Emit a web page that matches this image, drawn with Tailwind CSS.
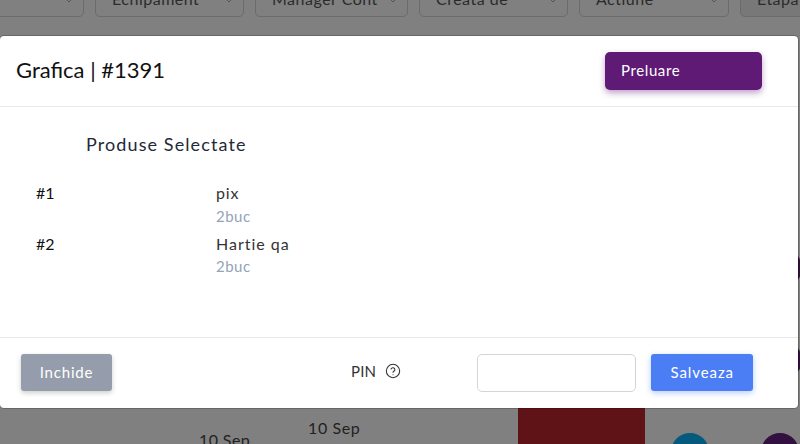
<!DOCTYPE html>
<html lang="en">
<head>
  <meta charset="UTF-8">
  <title>Grafica</title>
  <script src="https://cdn.jsdelivr.net/npm/@tailwindcss/browser@4"></script>
</head>
<body class="bg-[#808080] font-['Lato',sans-serif] text-[#111]">
<div class="relative h-[444px] w-[800px] overflow-hidden">

  <!-- Filters behind the overlay -->
  <div class="-mt-[21px] flex gap-[11px] whitespace-nowrap text-[16px] tracking-[0.5px] text-[#2b2b2b]">
    <div class="-ml-[20px] flex h-[38px] w-[104px] shrink-0 items-center justify-end rounded-[5px] border border-[#6b6b6b] pl-[16px] pr-[10px] pt-[2px]">
      <svg class="mt-[3px] h-[6px] w-[8px]" viewBox="0 0 8 6" fill="none" stroke="#555" stroke-width="1"><path d="M1 1l3 3 3-3"/></svg>
    </div>
    <div class="flex h-[38px] w-[149px] shrink-0 items-center justify-between rounded-[5px] border border-[#6b6b6b] pl-[16px] pr-[10px] pt-[2px]">
      <span>Echipament</span>
      <svg class="mt-[3px] h-[6px] w-[8px]" viewBox="0 0 8 6" fill="none" stroke="#555" stroke-width="1"><path d="M1 1l3 3 3-3"/></svg>
    </div>
    <div class="flex h-[38px] w-[153px] shrink-0 items-center justify-between rounded-[5px] border border-[#6b6b6b] pl-[16px] pr-[10px] pt-[2px]">
      <span>Manager Cont</span>
      <svg class="mt-[3px] h-[6px] w-[8px]" viewBox="0 0 8 6" fill="none" stroke="#555" stroke-width="1"><path d="M1 1l3 3 3-3"/></svg>
    </div>
    <div class="flex h-[38px] w-[149px] shrink-0 items-center justify-between rounded-[5px] border border-[#6b6b6b] pl-[16px] pr-[10px] pt-[2px]">
      <span>Creata de</span>
      <svg class="mt-[3px] h-[6px] w-[8px]" viewBox="0 0 8 6" fill="none" stroke="#555" stroke-width="1"><path d="M1 1l3 3 3-3"/></svg>
    </div>
    <div class="flex h-[38px] w-[150px] shrink-0 items-center justify-between rounded-[5px] border border-[#6b6b6b] pl-[16px] pr-[10px] pt-[2px]">
      <span>Actiune</span>
      <svg class="mt-[3px] h-[6px] w-[8px]" viewBox="0 0 8 6" fill="none" stroke="#555" stroke-width="1"><path d="M1 1l3 3 3-3"/></svg>
    </div>
    <div class="flex h-[38px] w-[100px] shrink-0 items-center rounded-[5px] border border-[#6b6b6b] bg-[#787878] pl-[16px] pt-[2px]">
      <span>Etapa</span>
    </div>
  </div>

  <!-- Board cards peeking out round the modal -->
  <div class="absolute left-[199px] top-[430px] text-[16px] leading-[20px] tracking-[0.4px] text-[#222]">10 Sep</div>
  <div class="absolute left-[308px] top-[418px] text-[16px] leading-[20px] tracking-[0.6px] text-[#222]">10 Sep</div>
  <div class="absolute left-[518px] top-[400px] h-[44px] w-[127px] bg-[#601317]"></div>
  <div class="absolute left-[671px] top-[433px] h-[38px] w-[38px] rounded-full bg-[#045a7c]"></div>
  <div class="absolute left-[761px] top-[433px] h-[38px] w-[38px] rounded-full bg-[#32103f]"></div>
  <div class="absolute left-[764px] top-[249px] h-[38px] w-[38px] rounded-full bg-[#32103f]"></div>
  <div class="absolute left-[764px] top-[341px] h-[38px] w-[38px] rounded-full bg-[#32103f]"></div>

  <!-- Modal -->
  <div class="absolute left-0 top-[36px] flex h-[372px] w-[798px] flex-col rounded-[4px] bg-white shadow-[0_0_0_1px_rgba(0,0,0,0.2)]">
    <div class="flex h-[71px] items-center justify-between border-b border-[#e9e9e9] pl-[16px] pr-[36px]">
      <h2 class="-mt-[4px] text-[22px]">Grafica | #1391</h2>
      <button class="h-[38px] w-[157px] rounded-[5px] bg-[#5e1a75] pb-[2px] pl-[16px] text-left text-[15px] tracking-[0.6px] text-white shadow-[0_3px_6px_rgba(94,26,117,0.4)]">Preluare</button>
    </div>

    <div class="flex-1 border-b border-[#e9e9e9]">
      <h3 class="ml-[86px] mt-[26px] text-[18px] leading-[22px] tracking-[1.1px] text-[#1f2937]">Produse Selectate</h3>
      <div class="ml-[36px] mt-[28px] grid grid-cols-[180px_1fr] text-[16px]">
        <div class="leading-[20px]">#1</div>
        <div class="h-[51px]">
          <div class="leading-[20px] tracking-[0.8px] text-[#333]">pix</div>
          <div class="mt-[3px] text-[15px] leading-[20px] tracking-[0.5px] text-[#94a3b8]">2buc</div>
        </div>
        <div class="leading-[20px]">#2</div>
        <div>
          <div class="leading-[20px] tracking-[1px] text-[#333]">Hartie qa</div>
          <div class="mt-[2px] text-[15px] leading-[20px] tracking-[0.5px] text-[#94a3b8]">2buc</div>
        </div>
      </div>
    </div>

    <div class="flex h-[70px] items-start pl-[21px] pt-[16px]">
      <button class="h-[37px] w-[91px] rounded-[3px] bg-[#959cab] pb-[1px] text-[15px] tracking-[0.8px] text-white shadow-[0_2px_5px_rgba(0,0,0,0.2)]">Inchide</button>
      <div class="ml-[239px] flex h-[34px] items-center gap-[9px] text-[15px] text-[#333]">
        <span class="tracking-[0.2px]">PIN</span>
        <svg class="h-[16px] w-[16px]" viewBox="0 0 24 24" fill="none" stroke="#333" stroke-width="1.6" stroke-linecap="round"><circle cx="12" cy="12" r="10"/><path d="M9.1 9a3 3 0 0 1 5.8 1c0 2-2.9 2.5-2.9 4"/><path d="M12 17.5h.01"/></svg>
      </div>
      <input type="text" class="ml-[76px] h-[38px] w-[159px] rounded-[5px] border border-[#d1d5db] bg-white">
      <button class="ml-[15px] h-[37px] w-[102px] rounded-[3px] bg-[#4b7df5] pb-[1px] text-[15px] tracking-[0.9px] text-white shadow-[0_2px_6px_rgba(75,125,245,0.4)]">Salveaza</button>
    </div>
  </div>
</div>
</body>
</html>
